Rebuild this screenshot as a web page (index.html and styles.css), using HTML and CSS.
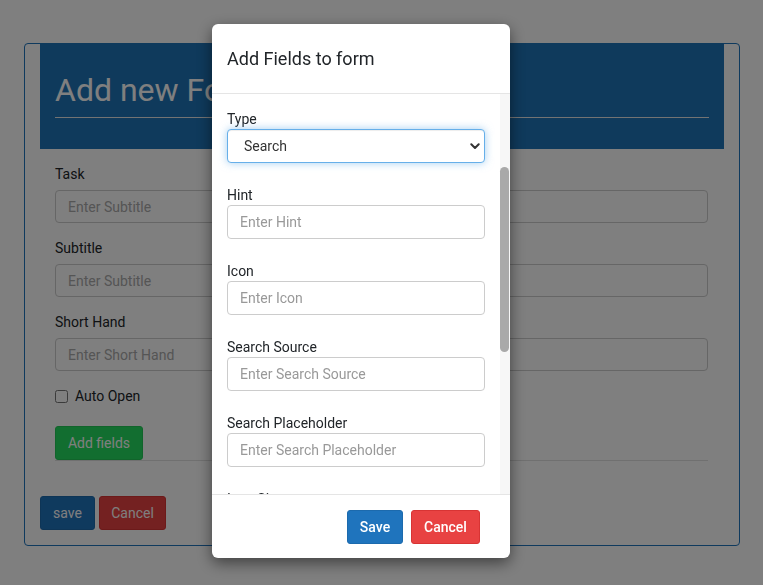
FILE: index.html
```html
<!DOCTYPE html>
<html lang="en">
<head>
<meta charset="utf-8">
<title>Add new Form</title>
<link rel="stylesheet" href="styles.css">
</head>
<body>
<div class="card">
  <div class="card-header">
    <h1 class="card-title">Add new Form</h1>
    <hr class="title-rule">
  </div>
  <form class="card-form">
    <div class="group">
      <label class="label">Task</label>
      <input class="input" type="text" placeholder="Enter Subtitle">
    </div>
    <div class="group">
      <label class="label">Subtitle</label>
      <input class="input" type="text" placeholder="Enter Subtitle">
    </div>
    <div class="group">
      <label class="label">Short Hand</label>
      <input class="input" type="text" placeholder="Enter Short Hand">
    </div>
    <label class="check-row"><input type="checkbox" class="check"> <span>Auto Open</span></label>
    <button type="button" class="btn btn-green">Add fields</button>
    <div class="form-rule"></div>
  </form>
  <div class="card-actions">
    <button type="button" class="btn btn-blue">save</button>
    <button type="button" class="btn btn-red">Cancel</button>
  </div>
</div>

<div class="backdrop"></div>

<div class="modal">
  <div class="modal-header">
    <h2 class="modal-title">Add Fields to form</h2>
  </div>
  <div class="modal-body-wrap">
    <div class="modal-body" id="modalBody">
      <div class="mgroup">
        <label class="mlabel">Label</label>
        <input class="minput" type="text" placeholder="Enter Label">
      </div>
      <div class="mgroup">
        <label class="mlabel">Name</label>
        <input class="minput" type="text" placeholder="Enter Name">
      </div>
      <div class="mgroup">
        <label class="mlabel">Type</label>
        <div class="select-wrap">
          <select class="mselect">
            <option>Search</option>
            <option>Text</option>
            <option>Number</option>
          </select>
          <svg class="chev" width="10" height="7" viewBox="0 0 10 7"><path d="M1.3 1.3 L5 5 L8.7 1.3" fill="none" stroke="#333" stroke-width="2" stroke-linecap="round" stroke-linejoin="round"/></svg>
        </div>
      </div>
      <div class="mgroup">
        <label class="mlabel">Hint</label>
        <input class="minput" type="text" placeholder="Enter Hint">
      </div>
      <div class="mgroup">
        <label class="mlabel">Icon</label>
        <input class="minput" type="text" placeholder="Enter Icon">
      </div>
      <div class="mgroup">
        <label class="mlabel">Search Source</label>
        <input class="minput" type="text" placeholder="Enter Search Source">
      </div>
      <div class="mgroup">
        <label class="mlabel">Search Placeholder</label>
        <input class="minput" type="text" placeholder="Enter Search Placeholder">
      </div>
      <div class="mgroup">
        <label class="mlabel">Icon Size</label>
        <input class="minput" type="text" placeholder="Enter Icon Size">
      </div>
      <div class="mgroup">
        <label class="mlabel">Search Key</label>
        <input class="minput" type="text" placeholder="Enter Search Key">
      </div>
      <div class="mgroup">
        <label class="mlabel">Default Value</label>
        <input class="minput" type="text" placeholder="Enter Default Value">
      </div>
      <div class="mgroup">
        <label class="mlabel">Required</label>
        <input class="minput" type="text" placeholder="Enter Required">
      </div>
    </div>
    <div class="scroll-track"><div class="scroll-thumb" id="scrollThumb"></div></div>
  </div>
  <div class="modal-footer">
    <button type="button" class="btn mbtn btn-blue">Save</button>
    <button type="button" class="btn mbtn btn-red">Cancel</button>
  </div>
</div>
<script src="script.js"></script>
</body>
</html>
```
FILE: styles.css
```css
* { box-sizing: border-box; }
html, body { margin: 0; padding: 0; }
body {
  background: #ffffff;
  font-family: Roboto, "Liberation Sans", Arial, sans-serif;
  font-size: 14px;
  color: #212529;
  width: 763px;
  height: 585px;
  overflow: hidden;
}

.card {
  margin: 43px 0 0 24px;
  width: 716px;
  border: 1px solid #1f74bd;
  border-radius: 4px;
  padding-bottom: 15px;
}
.card-header {
  margin: -1px 15px 0;
  background: #1e74b8;
  padding: 28px 15px 31px;
}
.card-title {
  margin: 0;
  font-size: 32px;
  line-height: 38px;
  font-weight: 400;
  color: #ffffff;
  white-space: nowrap;
}
.title-rule {
  margin: 8px 0 0;
  border: 0;
  border-top: 1px solid #e6e6e6;
  height: 0;
}
.card-form {
  padding: 15px 31px 0 30px;
  margin: 0;
}
.group { margin-bottom: 15px; }
.label {
  display: block;
  line-height: 20px;
  margin-bottom: 6px;
  color: #212529;
}
.input {
  display: block;
  width: 100%;
  height: 33px;
  border: 1px solid #cccccc;
  border-radius: 4px;
  padding: 0 12px;
  font-family: inherit;
  font-size: 14px;
  color: #333;
  background: #fff;
}
.input::placeholder { color: #aaaaaa; }
.check-row {
  display: flex;
  align-items: center;
  height: 20px;
  gap: 7px;
}
.check {
  margin: 0;
  width: 13px;
  height: 13px;
}
.btn {
  font-family: inherit;
  font-size: 14px;
  color: #ffffff;
  border: 1px solid transparent;
  border-radius: 3px;
  padding: 0;
  white-space: nowrap;
  cursor: pointer;
}
.btn-green {
  margin-top: 20px;
  height: 34px;
  width: 88px;
  background: #25dd60;
  border-color: #22c857;
  display: block;
}
.form-rule {
  border-top: 1px solid #e0e0e0;
  margin: 0;
}
.card-actions {
  padding: 35px 15px 0;
  display: flex;
  gap: 4px;
}
.card-actions .btn { height: 34px; }
.btn-blue {
  background: #1f74bd;
  border-color: #1c6aad;
}
.btn-red {
  background: #e84242;
  border-color: #d83434;
}
.card-actions .btn-blue { width: 55px; }
.card-actions .btn-red { width: 67px; }

.backdrop {
  position: fixed;
  inset: 0;
  background: rgba(0, 0, 0, 0.5);
}

.modal {
  position: fixed;
  left: 212px;
  top: 24px;
  width: 298px;
  height: 534px;
  background: #ffffff;
  border-radius: 6px;
  box-shadow: 0 5px 15px rgba(0, 0, 0, 0.5);
  overflow: hidden;
}
.modal-header {
  height: 70px;
  display: flex;
  align-items: center;
  padding: 0 15px;
  border-bottom: 1px solid #e5e5e5;
}
.modal-title {
  margin: 0;
  font-size: 18px;
  font-weight: 400;
  color: #212529;
}
.modal-body-wrap {
  position: relative;
  height: 400px;
}
.modal-body {
  height: 400px;
  overflow: hidden;
  padding: 21px 25px 8px 15px;
}
.scroll-track {
  position: absolute;
  top: 0;
  right: 0;
  bottom: 0;
  width: 10px;
  background: #f7f7f7;
}
.scroll-thumb {
  position: absolute;
  left: 0;
  right: 1px;
  top: 73px;
  height: 185px;
  background: #a9a9a9;
  border-radius: 5px;
}
.mgroup { margin-bottom: 22px; }
.mlabel {
  display: block;
  line-height: 20px;
  color: #212529;
}
.minput {
  display: block;
  width: 100%;
  height: 34px;
  border: 1px solid #cccccc;
  border-radius: 4px;
  padding: 0 12px;
  font-family: inherit;
  font-size: 14px;
  color: #333;
  background: #fff;
}
.minput::placeholder { color: #999999; }
.select-wrap { position: relative; }
.mselect {
  display: block;
  width: 100%;
  height: 34px;
  appearance: none;
  -webkit-appearance: none;
  border: 1px solid #66afe9;
  border-radius: 4px;
  padding: 0 30px 0 16px;
  font-family: inherit;
  font-size: 14px;
  color: #333;
  background: #fff;
  outline: none;
  box-shadow: inset 0 1px 1px rgba(0, 0, 0, 0.075), 0 0 8px rgba(102, 175, 233, 0.6);
}
.chev {
  position: absolute;
  right: 5px;
  top: 14px;
  pointer-events: none;
}
.modal-footer {
  height: 64px;
  border-top: 1px solid #e5e5e5;
  padding: 15px 30px 15px 15px;
  display: flex;
  justify-content: flex-end;
  gap: 8px;
}
.mbtn { height: 34px; font-weight: 500; }
.modal-footer .btn-blue { width: 56px; }
.modal-footer .btn-red { width: 69px; }
```
FILE: script.js
```js
(function () {
  var box = document.getElementById('modalBody');
  var bar = document.getElementById('scrollThumb');
  box.scrollTop = 158;
  var view = box.clientHeight;
  var full = box.scrollHeight;
  if (full > view) {
    var len = Math.round(view * view / full);
    var pos = Math.round(box.scrollTop / (full - view) * (view - len));
    bar.style.height = len + 'px';
    bar.style.top = pos + 'px';
  }
})();
```
